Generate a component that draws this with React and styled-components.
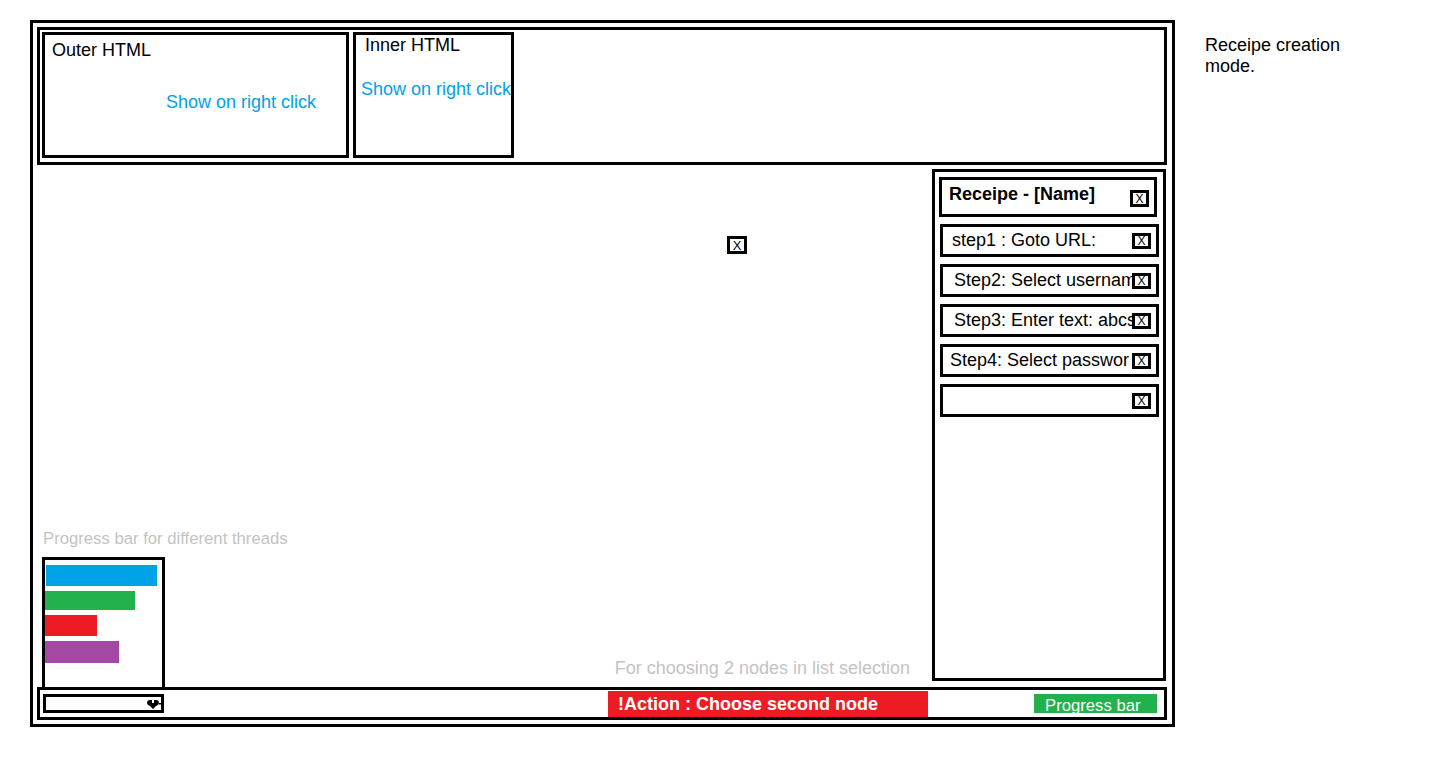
import React from 'react'
import styled, { createGlobalStyle } from 'styled-components'

const colors = {
  black: '#000000',
  blue: '#00a2e8',
  grey: '#c3c3c3',
  red: '#ed1c24',
  green: '#22b14c',
  purple: '#a349a4',
}

const GlobalStyle = createGlobalStyle`
body {
  margin: 0;
  background: #ffffff;
  font-family: "Liberation Sans", Arial, sans-serif;
  color: ${colors.black};
}
`

const threads = [
  { color: colors.blue, w: 111, h: 21, ml: 1 },
  { color: colors.green, w: 90, h: 19, ml: 0 },
  { color: colors.red, w: 52, h: 21, ml: 0 },
  { color: colors.purple, w: 74, h: 22, ml: 0 },
]

// step labels as they show in the mockup (cut where the close box sits)
const steps = [
  { text: 'step1 : Goto URL:', pl: 9 },
  { text: 'Step2: Select usernam', pl: 11 },
  { text: 'Step3: Enter text: abcs', pl: 11 },
  { text: 'Step4: Select passwor', pl: 7 },
  { text: '', pl: 7 },
]

const DropArrow = () => (
  <svg width="15" height="10" viewBox="0 0 15 10">
    <path d="M1 4 Q1 1 4 1 L10 1 Q13 1 13 4 Q13 6 10 7 L7 10 L4 7 Q1 6 1 4 Z" fill="#000" />
    <rect x="6" y="1" width="2" height="3" fill="#fff" />
    <rect x="13" y="4" width="2" height="1.5" fill="#000" />
  </svg>
)

const App = () => {
  return (
    <Page>
      <GlobalStyle />
      <Frame>
        <TopPanel>
          <HtmlBox $w={307}>
            <BoxTitle $pl={7} $pt={4.5}>Outer HTML</BoxTitle>
            <Hint $ml={121} $mt={31}>Show on right click</Hint>
          </HtmlBox>
          <HtmlBox $w={161}>
            <BoxTitle $pl={9} $pt={0}>Inner HTML</BoxTitle>
            <Hint $ml={5} $mt={23}>Show on right click</Hint>
          </HtmlBox>
        </TopPanel>

        <Middle>
          <Canvas>
            <FloatingClose $w={20} $h={18}>X</FloatingClose>
            <ThreadsColumn>
              <GreyNote $size={16.7} $lh={19} $ml={1} $mb={9}>Progress bar for different threads</GreyNote>
              <ThreadsBox>
                {threads.map((t, i) => (
                  <ThreadBar key={i} $color={t.color} $h={t.h} $ml={t.ml} style={{ width: t.w }} />
                ))}
              </ThreadsBox>
            </ThreadsColumn>
            <GreyNote $size={18} $lh={21} $mr={22} $mb={8}>For choosing 2 nodes in list selection</GreyNote>
          </Canvas>

          <RecipePanel>
            <RecipeHeader>
              <RecipeTitle>Receipe - [Name]</RecipeTitle>
              <CloseBox $w={19} $h={17} $mt={6}>X</CloseBox>
            </RecipeHeader>
            {steps.map((s, i) => (
              <StepRow key={i} $pl={s.pl}>
                <StepText>{s.text}</StepText>
                <StepClose $w={19} $h={16}>X</StepClose>
              </StepRow>
            ))}
          </RecipePanel>
        </Middle>

        <BottomBar>
          <ThreadSelect>
            <DropArrow />
          </ThreadSelect>
          <ActionBar>!Action : Choose second node</ActionBar>
          <ProgressBar>Progress bar</ProgressBar>
        </BottomBar>
      </Frame>

      <ModeNote>Receipe creation mode.</ModeNote>
    </Page>
  )
}

const Page = styled.div`
display: flex;
align-items: flex-start;
padding: 20px 0 0 30px;
`

const Frame = styled.div`
width: 1145px;
height: 707px;
box-sizing: border-box;
border: 3px solid ${colors.black};
padding: 4px 5px 4px 4px;
display: flex;
flex-direction: column;
`

const TopPanel = styled.div`
height: 138px;
flex-shrink: 0;
box-sizing: border-box;
border: 3px solid ${colors.black};
padding: 2px;
display: flex;
gap: 4px;
align-items: flex-start;
`

const HtmlBox = styled.div`
width: ${p => p.$w}px;
height: 126px;
box-sizing: border-box;
border: 3px solid ${colors.black};
display: flex;
flex-direction: column;
`

const BoxTitle = styled.div`
font-size: 18px;
line-height: 21px;
padding: ${p => p.$pt}px 0 0 ${p => p.$pl}px;
white-space: nowrap;
`

const Hint = styled.div`
font-size: 18px;
line-height: 21px;
color: ${colors.blue};
margin: ${p => p.$mt}px 0 0 ${p => p.$ml}px;
white-space: nowrap;
`

const Middle = styled.div`
height: 522px;
flex-shrink: 0;
display: flex;
`

const Canvas = styled.div`
flex: 1;
position: relative;
display: flex;
align-items: flex-end;
justify-content: space-between;
padding-left: 5px;
`

const ThreadsColumn = styled.div`
display: flex;
flex-direction: column;
margin-bottom: -3px;
position: relative;
z-index: 1;
`

const GreyNote = styled.div`
font-size: ${p => p.$size}px;
line-height: ${p => p.$lh}px;
color: ${colors.grey};
white-space: nowrap;
margin: 0 ${p => p.$mr || 0}px ${p => p.$mb || 0}px ${p => p.$ml || 0}px;
`

const ThreadsBox = styled.div`
width: 123px;
height: 133px;
box-sizing: border-box;
border: 3px solid ${colors.black};
background: #ffffff;
padding-top: 5px;
display: flex;
flex-direction: column;
gap: 5px;
`

const ThreadBar = styled.div`
height: ${p => p.$h}px;
margin-left: ${p => p.$ml}px;
background: ${p => p.$color};
`

const CloseBox = styled.div`
width: ${p => p.$w}px;
height: ${p => p.$h}px;
margin-top: ${p => p.$mt || 0}px;
flex-shrink: 0;
box-sizing: border-box;
border: 3px solid ${colors.black};
background: #ffffff;
display: flex;
align-items: center;
justify-content: center;
font-size: 12px;
line-height: 1;
`

const StepClose = styled(CloseBox)`
position: relative;
z-index: 1;
`

const FloatingClose = styled(CloseBox)`
position: absolute;
left: 690px;
top: 71px;
font-size: 13px;
`

const RecipePanel = styled.div`
width: 234px;
margin: 4px 1px 6px 0;
box-sizing: border-box;
border: 3px solid ${colors.black};
padding-top: 5px;
display: flex;
flex-direction: column;
gap: 7px;
`

const RecipeHeader = styled.div`
margin-left: 4px;
width: 218px;
height: 40px;
flex-shrink: 0;
box-sizing: border-box;
border: 3px solid ${colors.black};
padding: 4px 5px 0 7px;
display: flex;
align-items: flex-start;
justify-content: space-between;
`

const RecipeTitle = styled.div`
font-size: 18px;
line-height: 21px;
font-weight: bold;
white-space: nowrap;
`

const StepRow = styled.div`
margin-left: 5px;
width: 219px;
height: 33px;
flex-shrink: 0;
box-sizing: border-box;
border: 3px solid ${colors.black};
padding: 0 5px 0 ${p => p.$pl}px;
display: flex;
align-items: center;
`

const StepText = styled.div`
flex: 1;
min-width: 0;
white-space: nowrap;
font-size: 18px;
line-height: 21px;
`

const BottomBar = styled.div`
height: 33px;
flex-shrink: 0;
box-sizing: border-box;
border: 3px solid ${colors.black};
display: flex;
align-items: center;
`

const ThreadSelect = styled.div`
width: 121px;
height: 19px;
margin-left: 3px;
flex-shrink: 0;
box-sizing: border-box;
border: 3px solid ${colors.black};
display: flex;
align-items: center;
justify-content: flex-end;
position: relative;
z-index: 1;
`

const ActionBar = styled.div`
width: 320px;
height: 26px;
margin-left: 444px;
align-self: flex-end;
flex-shrink: 0;
box-sizing: border-box;
padding-left: 10px;
background: ${colors.red};
color: #ffffff;
font-size: 18px;
font-weight: bold;
line-height: 26px;
white-space: nowrap;
`

const ProgressBar = styled.div`
width: 123px;
height: 19px;
margin-left: 106px;
flex-shrink: 0;
box-sizing: border-box;
padding: 3px 0 0 11px;
background: ${colors.green};
color: #ffffff;
font-size: 16.7px;
line-height: 18px;
white-space: nowrap;
`

const ModeNote = styled.div`
width: 150px;
margin: 15px 0 0 30px;
font-size: 18px;
line-height: 21px;
`

export default App
